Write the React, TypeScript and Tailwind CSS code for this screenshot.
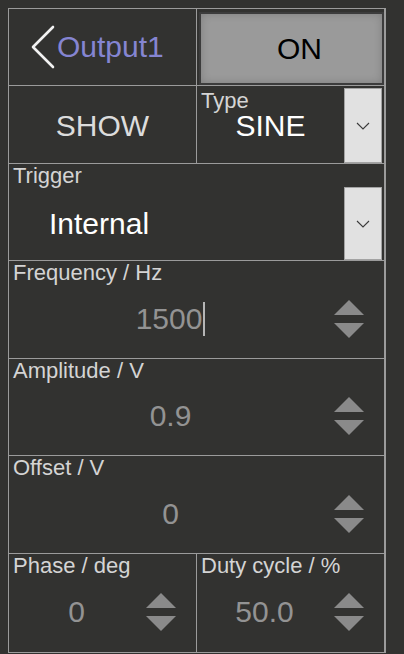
import React from "react";

const fontCls = "font-['Liberation_Sans',Arial,sans-serif]";

function DropButton({ className = "" }: { className?: string }) {
  return (
    <div className={`w-[38px] bg-[#e1e1e1] border border-[#a3a3a3] flex items-center justify-center ${className}`}>
      <svg width="14" height="8" viewBox="0 0 14 8">
        <path d="M1 1 L7 7 L13 1" fill="none" stroke="#3a3a3a" strokeWidth="1.1" />
      </svg>
    </div>
  );
}

function Spinner() {
  return (
    <div className="flex flex-col gap-[8px] mr-[20px] ml-[2px]">
      <svg width="30" height="15" viewBox="0 0 30 15">
        <polygon points="15,0 30,15 0,15" fill="#8a8a8a" />
      </svg>
      <svg width="30" height="15" viewBox="0 0 30 15">
        <polygon points="0,0 30,0 15,15" fill="#8a8a8a" />
      </svg>
    </div>
  );
}

function NumberField({ label, value, caret = false, className = "" }: { label: string; value: string; caret?: boolean; className?: string }) {
  return (
    <div className={`flex flex-col ${className}`}>
      <div className="text-[22px] leading-[22px] text-[#d4d4d4] pl-[4px] pt-[1px] whitespace-nowrap">{label}</div>
      <div className="flex-1 flex items-center pb-[5px]">
        <div className="flex-1 text-center text-[30px] leading-[34px] text-[#939393]">
          {value}
          {caret && <span className="inline-block w-[2px] h-[34px] bg-[#b5b5b5] align-top ml-[1px]" />}
        </div>
        <Spinner />
      </div>
    </div>
  );
}

export default function App() {
  return (
    <div className={`min-h-screen w-full bg-[#323230] pt-[8px] pl-[8px] ${fontCls}`}>
      <div className="w-[378px] border-l border-t border-r-2 border-[#9b9b9b]">
        {/* Output header */}
        <div className="grid grid-cols-[188px_1fr] h-[77px] border-b border-[#9b9b9b]">
          <div className="flex items-center pl-[22px] border-r border-[#9b9b9b]">
            <svg width="24" height="44" viewBox="0 0 24 44">
              <path d="M22 2 L2 22 L22 42" fill="none" stroke="#f2f2f2" strokeWidth="2.6" strokeLinecap="round" strokeLinejoin="round" />
            </svg>
            <span className="ml-[2px] text-[30px] leading-none text-[#8585d2]">Output1</span>
          </div>
          <div className="pt-[3px] pl-[2px]">
            <div className="h-[73px] border-2 border-[#3c3c3c] bg-[#9a9a9a] shadow-[inset_0_0_8px_rgba(0,0,0,0.18)] flex items-center justify-center pl-[16px] text-[30px] leading-none text-black">
              ON
            </div>
          </div>
        </div>

        {/* Show / Type */}
        <div className="grid grid-cols-[188px_1fr] h-[78px] border-b border-[#9b9b9b]">
          <div className="flex items-center justify-center pt-[3px] border-r border-[#9b9b9b] text-[30px] leading-none text-[#dcdcdc]">
            SHOW
          </div>
          <div className="flex">
            <div className="flex-1 flex flex-col">
              <div className="text-[22px] leading-[22px] text-[#d4d4d4] pl-[4px] pt-[4px]">Type</div>
              <div className="text-center text-[30px] leading-[30px] text-white mt-[-1px]">SINE</div>
            </div>
            <DropButton className="mt-[2px] mr-[2px]" />
          </div>
        </div>

        {/* Trigger */}
        <div className="h-[97px] border-b border-[#9b9b9b] flex flex-col">
          <div className="h-[23px] text-[22px] leading-[22px] text-[#d4d4d4] pl-[4px] pt-[1px]">Trigger</div>
          <div className="flex-1 flex">
            <div className="flex-1 flex items-center pl-[40px] text-[30px] leading-none text-white">Internal</div>
            <DropButton className="mr-[2px]" />
          </div>
        </div>

        <NumberField label="Frequency / Hz" value="1500" caret className="h-[98px] border-b border-[#9b9b9b]" />
        <NumberField label="Amplitude / V" value="0.9" className="h-[97px] border-b border-[#9b9b9b]" />
        <NumberField label="Offset / V" value="0" className="h-[98px] border-b border-[#9b9b9b]" />

        <div className="grid grid-cols-[188px_1fr] h-[99px] border-b border-[#9b9b9b]">
          <NumberField label="Phase / deg" value="0" className="border-r border-[#9b9b9b]" />
          <NumberField label="Duty cycle / %" value="50.0" />
        </div>
      </div>
    </div>
  );
}
